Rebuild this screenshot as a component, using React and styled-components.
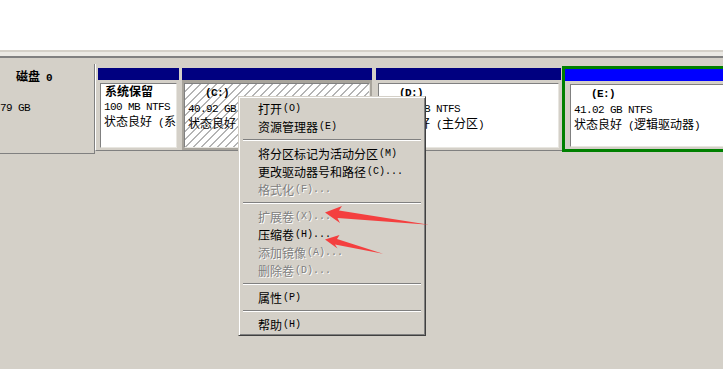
import styled, { createGlobalStyle } from "styled-components";

const GlobalStyle = createGlobalStyle`
  html, body {
    margin: 0;
    padding: 0;
    background: #d4d0c8;
    overflow: hidden;
  }
  body {
    font-family: "Noto Sans CJK SC", "Liberation Sans", sans-serif;
    font-size: 12px;
    color: #000;
  }
`;

const menuItems = [
  { text: "打开", key: "(O)" },
  { text: "资源管理器", key: "(E)" },
  "sep",
  { text: "将分区标记为活动分区", key: "(M)" },
  { text: "更改驱动器号和路径", key: "(C)..." },
  { text: "格式化", key: "(F)...", disabled: true },
  "sep",
  { text: "扩展卷", key: "(X)...", disabled: true },
  { text: "压缩卷", key: "(H)..." },
  { text: "添加镜像", key: "(A)...", disabled: true },
  { text: "删除卷", key: "(D)...", disabled: true },
  "sep",
  { text: "属性", key: "(P)" },
  "sep",
  { text: "帮助", key: "(H)" },
];

function App() {
  return (
    <Page>
      <GlobalStyle />
      <TopPane />
      <Splitter />
      <DiskRow>
        <DiskLabel>
          <DiskTitle>
            磁盘<M> 0</M>
          </DiskTitle>
          <DiskSize>
            <M>59.79 GB</M>
          </DiskSize>
        </DiskLabel>
        <Partitions>
          <Partition $w={81} $gap={3}>
            <Header />
            <Body>
              <Box>
                <Title>系统保留</Title>
                <Line>
                  <M>100 MB NTFS</M>
                </Line>
                <Line>
                  状态良好<M> (</M>系统<M>,</M> 活动<M>,</M> 主分区<M>)</M>
                </Line>
              </Box>
            </Body>
          </Partition>
          <Partition $w={190} $gap={4}>
            <Header />
            <Body $selected>
              <Box $hatched>
                <Title $indent>
                  <M>(C:)</M>
                </Title>
                <Line>
                  <M>40.92 GB NTFS</M>
                </Line>
                <Line>
                  状态良好<M> (</M>启动<M>,</M> 页面文件<M>,</M> 故障转储<M>)</M>
                </Line>
              </Box>
            </Body>
          </Partition>
          <Partition $w={185} $gap={1}>
            <Header />
            <Body>
              <Box>
                <Title $indent>
                  <M>(D:)</M>
                </Title>
                <Line>
                  <M>17.76 GB NTFS</M>
                </Line>
                <Line>
                  状态良好<M> (</M>主分区<M>)</M>
                </Line>
              </Box>
            </Body>
          </Partition>
          <Extended>
            <Header $logical />
            <Body $logical>
              <Box>
                <Title $indent>
                  <M>(E:)</M>
                </Title>
                <Line>
                  <M>41.02 GB NTFS</M>
                </Line>
                <Line>
                  状态良好<M> (</M>逻辑驱动器<M>)</M>
                </Line>
              </Box>
            </Body>
          </Extended>
        </Partitions>
      </DiskRow>

      <Menu>
        {menuItems.map((item, i) =>
          item === "sep" ? (
            <Separator key={i} />
          ) : (
            <MenuItem key={i} $disabled={item.disabled}>
              {item.text}
              <Accel>{item.key}</Accel>
            </MenuItem>
          )
        )}
      </Menu>

      <Arrows width="723" height="369" viewBox="0 0 723 369">
        <polygon points="325,212.5 342,206 339,210.5 429,224.8 337.5,218 340,223" />
        <polygon points="325,239.5 339.5,235 337,239 383,253.8 335,244.5 337.5,248.5" />
      </Arrows>
    </Page>
  );
}

const Page = styled.div`
  position: relative;
  width: 723px;
  height: 369px;
  overflow: hidden;
  background: #d4d0c8;
`;

const TopPane = styled.div`
  height: 50px;
  background: #fff;
`;

const Splitter = styled.div`
  height: 4px;
  background: #ebe9e4;
  border-top: 2px solid #d4d0c8;
  border-bottom: 2px solid #808080;
`;

const DiskRow = styled.div`
  display: flex;
  margin-top: 6px;
  height: 90px;
`;

// SimSun-like half-width latin: 6px advance, full cell height
const M = styled.span`
  font-family: "Liberation Mono", "DejaVu Sans Mono", monospace;
  font-size: 11px;
  letter-spacing: -0.6px;
`;

const DiskLabel = styled.div`
  flex-shrink: 0;
  width: 95px;
  box-sizing: border-box;
  border-right: 1px solid #808080;
  border-bottom: 1px solid #808080;
  overflow: hidden;
  padding-top: 5px;
  line-height: 14px;
`;

const DiskTitle = styled.div`
  font-weight: bold;
  padding-left: 16px;
  white-space: pre;
  ${M} {
    font-weight: bold;
  }
`;

const DiskSize = styled.div`
  margin-top: 14px;
  text-indent: -18px;
`;

const Partitions = styled.div`
  display: flex;
  flex-shrink: 0;
  box-sizing: border-box;
  height: 87px;
  padding: 4px 0 0 2px;
  border-left: 1px solid #fff;
  border-bottom: 1px solid #808080;
`;

const Partition = styled.div`
  display: flex;
  flex-direction: column;
  flex-shrink: 0;
  width: ${(p) => p.$w}px;
  height: 82px;
  margin-right: ${(p) => p.$gap}px;
`;

const Extended = styled.div`
  display: flex;
  flex-direction: column;
  flex-shrink: 0;
  box-sizing: border-box;
  width: 190px;
  height: 86px;
  margin-top: -2px;
  border: 3px solid #008000;
  border-right: none;
`;

const Header = styled.div`
  height: 12px;
  flex-shrink: 0;
  background: ${(p) => (p.$logical ? "#0000ff" : "#000080")};
`;

const Body = styled.div`
  flex: 1;
  display: flex;
  min-height: 0;
  padding: 3px 2px 2px ${(p) => (p.$logical ? 5 : 2)}px;
  background: ${(p) => (p.$selected ? "#a8a49c" : "#d4d0c8")};
`;

const Box = styled.div`
  flex: 1;
  min-width: 0;
  overflow: hidden;
  white-space: pre;
  padding: 0 0 0 3px;
  border-top: 1px solid #808080;
  border-left: 1px solid #808080;
  border-right: 1px solid #e8e6e0;
  border-bottom: 1px solid #e8e6e0;
  background: ${(p) =>
    p.$hatched
      ? "repeating-linear-gradient(135deg, #fff 0px, #fff 4.6px, #b4b4b4 4.6px, #b4b4b4 5.66px)"
      : "#fff"};
`;

const Title = styled.div`
  font-weight: bold;
  line-height: 14px;
  padding-left: ${(p) => (p.$indent ? 17 : 1)}px;
  ${M} {
    font-weight: bold;
  }
`;

const Line = styled.div`
  line-height: 14px;
`;

const Menu = styled.div`
  position: absolute;
  left: 238px;
  top: 96px;
  width: 188px;
  box-sizing: border-box;
  padding: 2px;
  background: #d4d0c8;
  border-top: 1px solid #d4d0c8;
  border-left: 1px solid #d4d0c8;
  border-right: 1px solid #404040;
  border-bottom: 1px solid #404040;
  box-shadow: inset 1px 1px #fff, inset -1px -1px #808080;
`;

const MenuItem = styled.div`
  display: flex;
  align-items: center;
  height: 18px;
  padding-left: 17px;
  white-space: nowrap;
  color: ${(p) => (p.$disabled ? "#808080" : "#000")};
  text-shadow: ${(p) => (p.$disabled ? "1px 1px 0 #fff" : "none")};
`;

const Accel = styled.span`
  font-family: "Liberation Mono", "DejaVu Sans Mono", monospace;
  font-size: 10px;
  margin-left: 1px;
`;

const Separator = styled.div`
  height: 9px;
  display: flex;
  align-items: center;
  margin: 0 2px;

  &::before {
    content: "";
    flex: 1;
    border-top: 1px solid #808080;
    border-bottom: 1px solid #fff;
  }
`;

const Arrows = styled.svg`
  position: absolute;
  left: 0;
  top: 0;
  pointer-events: none;

  polygon {
    fill: #f43f3f;
  }
`;

export default App;
